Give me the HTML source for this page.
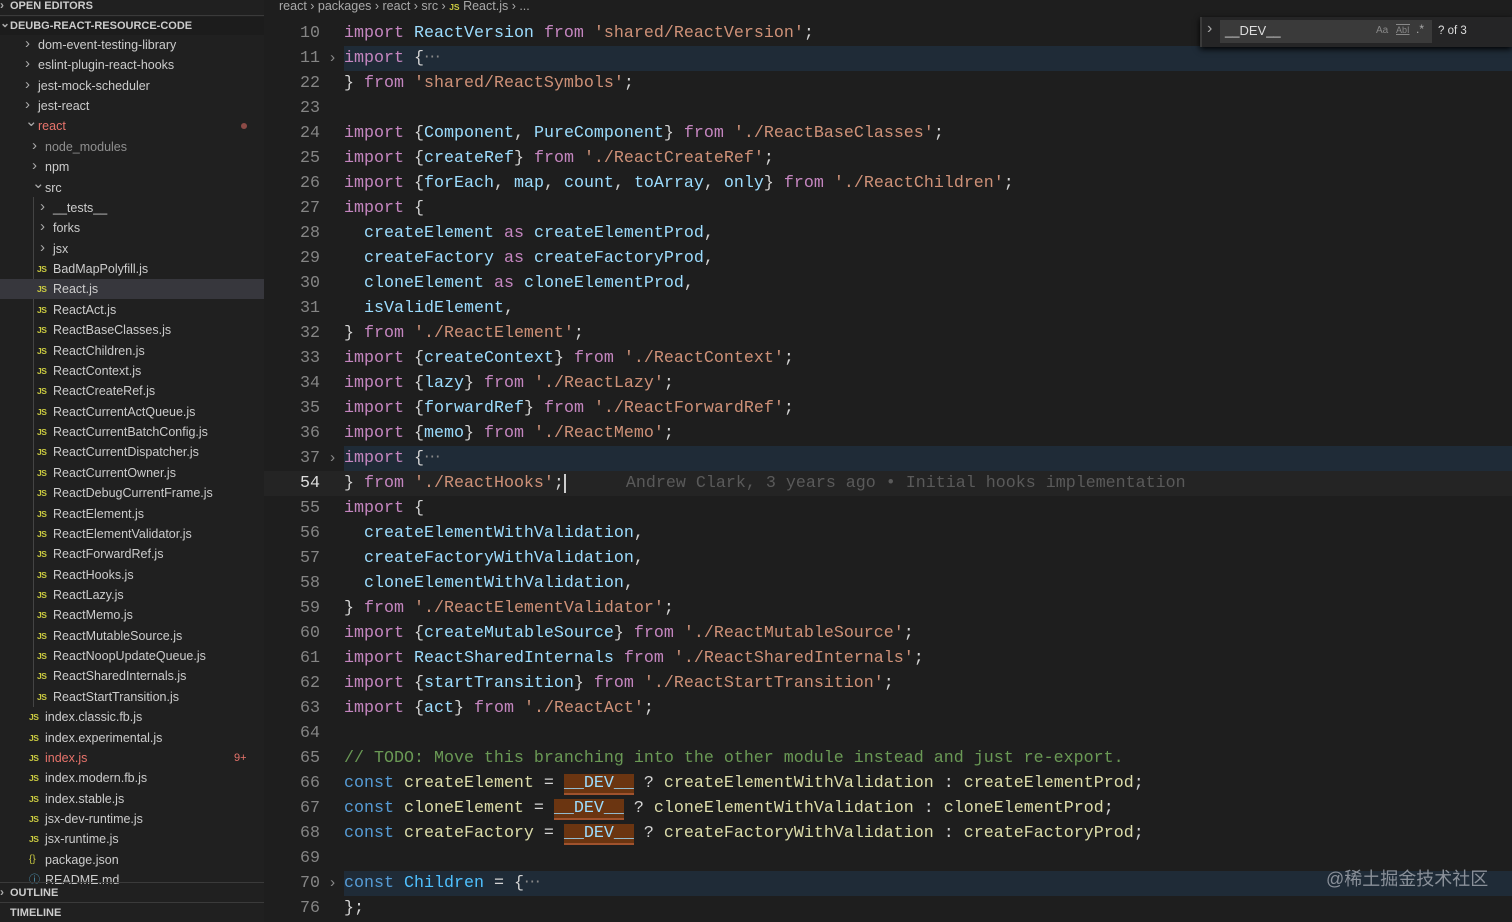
<!DOCTYPE html>
<html><head><meta charset="utf-8"><style>
*{margin:0;padding:0;box-sizing:border-box}
body{width:1512px;height:913px;overflow:hidden;background:#1e1e1e;font-family:"Liberation Sans","Noto Sans CJK SC",sans-serif;position:relative}
#side{position:absolute;left:0;top:0;width:264px;height:913px;background:#202020;color:#cccccc;font-size:12.5px}
.r{position:absolute;left:0;width:264px;height:20px;line-height:20px;white-space:nowrap}
.chev{position:absolute;color:#aaa;font-size:15px}
.js{position:absolute;color:#cbcb41;font-size:8.5px;font-weight:bold;letter-spacing:-0.5px}
.hdr{position:absolute;left:0;width:264px;font-size:11px;font-weight:bold;color:#ccc;height:18px;line-height:18px}
#ed{position:absolute;left:264px;top:0;width:1248px;height:913px;background:#1e1e1e}
#bc{position:absolute;left:279px;top:0;height:14px;line-height:13px;font-size:12.5px;color:#a9a9a9}
.ln{position:absolute;left:0;width:1512px;height:25px;line-height:25px;font-family:"Liberation Mono",monospace;font-size:16.67px;white-space:pre;color:#d4d4d4}
.num{position:absolute;left:280px;width:40px;text-align:right;color:#858585}
.code{position:absolute;left:344px}
.k{color:#c586c0}.v{color:#9cdcfe}.s{color:#ce9178}.c{color:#569cd6}.cm{color:#6a9955}.t{color:#4fc1ff}
.dev{background:#6b3511;border-bottom:2px solid #a0522d;color:#9cdcfe}
</style></head><body>
<div id="side">
<div class="hdr" style="top:-3px;padding-left:10px">OPEN EDITORS<span class="chev" style="left:0;top:-1px;font-size:12px">›</span></div>
<div style="position:absolute;top:15px;left:0;width:264px;height:1px;background:#3a3a3a"></div>
<div class="hdr" style="top:17px;padding-left:10px;background:#1c1c1c">DEUBG-REACT-RESOURCE-CODE<span class="chev" style="left:0;top:-3px;font-size:12px">⌄</span></div>
<div style="position:absolute;left:33px;top:197px;width:1px;height:510px;background:#444"></div>
<div id="rows"></div>
<div style="position:absolute;top:882px;left:0;width:264px;height:1px;background:#3a3a3a"></div>
<div class="hdr" style="top:884px;padding-left:10px;background:#202020">OUTLINE<span class="chev" style="left:0;top:-1px;font-size:12px">›</span></div>
<div style="position:absolute;top:902px;left:0;width:264px;height:1px;background:#3a3a3a"></div>
<div class="hdr" style="top:904px;padding-left:10px;background:#202020">TIMELINE</div>
</div>
<div id="ed"></div>
<div id="bc">react › packages › react › src › <span style="color:#cbcb41;font-size:8.5px;font-weight:bold">JS</span> React.js › ...</div>
<div id="code"></div>
<div style="position:absolute;left:1200px;top:17px;width:312px;height:30px;background:#252526;border-left:2px solid #3a3a3a;box-shadow:0 2px 6px #000"></div>
<div style="position:absolute;left:1207px;top:20px;color:#aaa;font-size:16px">›</div>
<div style="position:absolute;left:1220px;top:20px;width:212px;height:23px;background:#3a3a3a"></div>
<div style="position:absolute;left:1225px;top:23px;color:#ddd;font-size:13px">__DEV__</div>
<div style="position:absolute;left:1376px;top:25px;color:#888;font-size:10px">Aa</div>
<div style="position:absolute;left:1396px;top:24px;color:#888;font-size:9px;text-decoration:underline;border-top:1px solid #888;line-height:10px">AbI</div>
<div style="position:absolute;left:1416px;top:22px;color:#aaa;font-size:12px">.*</div>
<div style="position:absolute;left:1438px;top:25px;color:#ddd;font-size:11.5px">? of 3</div>
<div style="position:absolute;left:1326px;top:865px;color:#8a9099;font-size:18px;font-family:'Liberation Sans','Noto Sans CJK SC',sans-serif">@稀土掘金技术社区</div>
<script>
var items=[
["dom-event-testing-library",1,"c"],["eslint-plugin-react-hooks",1,"c"],["jest-mock-scheduler",1,"c"],["jest-react",1,"c"],["react",1,"o","#e8746c"],
["node_modules",2,"c","#8f8f8f"],["npm",2,"c"],["src",2,"o"],["__tests__",3,"c"],["forks",3,"c"],["jsx",3,"c"]];
"BadMapPolyfill.js React.js ReactAct.js ReactBaseClasses.js ReactChildren.js ReactContext.js ReactCreateRef.js ReactCurrentActQueue.js ReactCurrentBatchConfig.js ReactCurrentDispatcher.js ReactCurrentOwner.js ReactDebugCurrentFrame.js ReactElement.js ReactElementValidator.js ReactForwardRef.js ReactHooks.js ReactLazy.js ReactMemo.js ReactMutableSource.js ReactNoopUpdateQueue.js ReactSharedInternals.js ReactStartTransition.js".split(" ").forEach(function(n){items.push([n,3,"j"])});
"index.classic.fb.js index.experimental.js index.js index.modern.fb.js index.stable.js jsx-dev-runtime.js jsx-runtime.js".split(" ").forEach(function(n){items.push([n,2,"j",n=="index.js"?"#e8746c":null])});
items.push(["package.json",2,"b"]);items.push(["README.md",2,"i"]);
var tx={1:38,2:45,3:53},h="";
items.forEach(function(it,k){var top=35+20.37*k;var x=tx[it[1]];
var bg=it[0]=="React.js"?"background:#37373d;":"";
h+='<div class="r" style="top:'+top+'px;'+bg+'">';
if(it[2]=="c"||it[2]=="o")h+='<span class="chev" style="left:'+(x-13)+'px;'+(it[2]=="o"?"top:-4px":"top:-1px")+'">'+(it[2]=="o"?"⌄":"›")+'</span>';
if(it[2]=="j")h+='<span class="js" style="left:'+(x-16)+'px">JS</span>';
if(it[2]=="b")h+='<span style="position:absolute;left:'+(x-16)+'px;color:#cbcb41;font-size:10px">{}</span>';
if(it[2]=="i")h+='<span style="position:absolute;left:'+(x-16)+'px;color:#519aba;font-size:11px">ⓘ</span>';
h+='<span style="position:absolute;left:'+x+'px;'+(it[3]?"color:"+it[3]:"")+'">'+it[0]+'</span>';
if(it[0]=="react")h+='<span style="position:absolute;left:241px;top:7px;width:6px;height:6px;border-radius:3px;background:#8c4a46"></span>';
if(it[0]=="index.js")h+='<span style="position:absolute;left:234px;color:#e8746c;font-size:11px">9+</span>';
h+='</div>';});
document.getElementById("rows").innerHTML=h;
function K(t){return '<span class="k">'+t+'</span>'}function V(t){return '<span class="v">'+t+'</span>'}function S(t){return '<span class="s">'+t+'</span>'}function C(t){return '<span class="c">'+t+'</span>'}
var D='<span class="dev">__DEV__</span>';
var Y=function(t){return "<span style='color:#dcdcaa'>"+t+"</span>"};
var L=[
[10,K("import")+" "+V("ReactVersion")+" "+K("from")+" "+S("'shared/ReactVersion'")+";"],
[11,K("import")+" {<span style='color:#888'>⋯</span>","f"],
[22,"} "+K("from")+" "+S("'shared/ReactSymbols'")+";"],
[23,""],
[24,K("import")+" {"+V("Component")+", "+V("PureComponent")+"} "+K("from")+" "+S("'./ReactBaseClasses'")+";"],
[25,K("import")+" {"+V("createRef")+"} "+K("from")+" "+S("'./ReactCreateRef'")+";"],
[26,K("import")+" {"+V("forEach")+", "+V("map")+", "+V("count")+", "+V("toArray")+", "+V("only")+"} "+K("from")+" "+S("'./ReactChildren'")+";"],
[27,K("import")+" {"],
[28,"  "+V("createElement")+" "+K("as")+" "+V("createElementProd")+","],
[29,"  "+V("createFactory")+" "+K("as")+" "+V("createFactoryProd")+","],
[30,"  "+V("cloneElement")+" "+K("as")+" "+V("cloneElementProd")+","],
[31,"  "+V("isValidElement")+","],
[32,"} "+K("from")+" "+S("'./ReactElement'")+";"],
[33,K("import")+" {"+V("createContext")+"} "+K("from")+" "+S("'./ReactContext'")+";"],
[34,K("import")+" {"+V("lazy")+"} "+K("from")+" "+S("'./ReactLazy'")+";"],
[35,K("import")+" {"+V("forwardRef")+"} "+K("from")+" "+S("'./ReactForwardRef'")+";"],
[36,K("import")+" {"+V("memo")+"} "+K("from")+" "+S("'./ReactMemo'")+";"],
[37,K("import")+" {<span style='color:#888'>⋯</span>","f"],
[54,"} "+K("from")+" "+S("'./ReactHooks'")+";<span style='border-left:2px solid #ccc'></span>      <span style='color:#5a5a5a'>Andrew Clark, 3 years ago • Initial hooks implementation</span>","cur"],
[55,K("import")+" {"],
[56,"  "+V("createElementWithValidation")+","],
[57,"  "+V("createFactoryWithValidation")+","],
[58,"  "+V("cloneElementWithValidation")+","],
[59,"} "+K("from")+" "+S("'./ReactElementValidator'")+";"],
[60,K("import")+" {"+V("createMutableSource")+"} "+K("from")+" "+S("'./ReactMutableSource'")+";"],
[61,K("import")+" "+V("ReactSharedInternals")+" "+K("from")+" "+S("'./ReactSharedInternals'")+";"],
[62,K("import")+" {"+V("startTransition")+"} "+K("from")+" "+S("'./ReactStartTransition'")+";"],
[63,K("import")+" {"+V("act")+"} "+K("from")+" "+S("'./ReactAct'")+";"],
[64,""],
[65,"<span class='cm'>// TODO: Move this branching into the other module instead and just re-export.</span>"],
[66,C("const")+" "+Y("createElement")+" = "+D+" ? "+Y("createElementWithValidation")+" : "+Y("createElementProd")+";"],
[67,C("const")+" "+Y("cloneElement")+" = "+D+" ? "+Y("cloneElementWithValidation")+" : "+Y("cloneElementProd")+";"],
[68,C("const")+" "+Y("createFactory")+" = "+D+" ? "+Y("createFactoryWithValidation")+" : "+Y("createFactoryProd")+";"],
[69,""],
[70,C("const")+" <span class='t'>Children</span> = {<span style='color:#888'>⋯</span>","f"],
[76,"};"]];
var o="";
L.forEach(function(l,i){var top=20.5+25*i;
var bg=l[2]=="f"?'<div style="position:absolute;left:344px;right:0;top:0;height:25px;background:#1f2b37"></div>':(l[2]=="cur"?'<div style="position:absolute;left:264px;right:0;top:0;height:25px;background:#242424"></div>':'');
o+='<div class="ln" style="top:'+top+'px">'+bg+'<span class="num" style="'+(l[2]=="cur"?"color:#ddd":"")+'">'+l[0]+'</span>'+(l[2]=="f"?'<span style="position:absolute;left:328px;color:#888;font-size:15px">›</span>':'')+'<span class="code">'+l[1]+'</span></div>';});
document.getElementById("code").innerHTML=o;
</script>
</body></html>
